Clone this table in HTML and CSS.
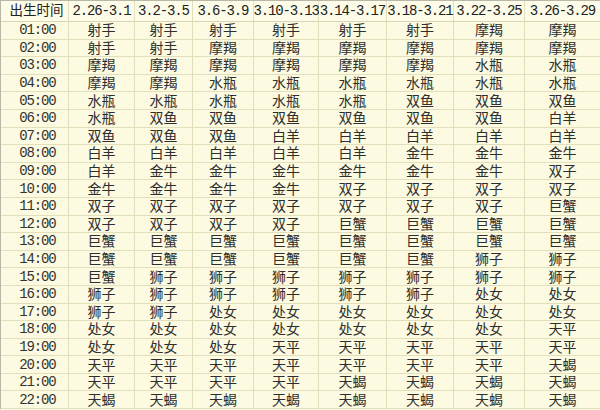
FILE: index.html
```html
<!DOCTYPE html>
<html lang="zh-CN">
<head>
<meta charset="utf-8">
<title>出生时间 星座表</title>
<link rel="stylesheet" href="styles.css">
</head>
<body>
<div class="sheet">
  <div class="c h first"><span>出生时间</span></div>
  <div class="c h num"><span>2.26-3.1</span></div>
  <div class="c h num"><span>3.2-3.5</span></div>
  <div class="c h num"><span>3.6-3.9</span></div>
  <div class="c h num"><span>3.10-3.13</span></div>
  <div class="c h num"><span>3.14-3.17</span></div>
  <div class="c h num"><span>3.18-3.21</span></div>
  <div class="c h num"><span>3.22-3.25</span></div>
  <div class="c h num"><span>3.26-3.29</span></div>

  <div class="c t">01:00</div><div class="c">射手</div><div class="c">射手</div><div class="c">射手</div><div class="c">射手</div><div class="c">射手</div><div class="c">射手</div><div class="c">摩羯</div><div class="c">摩羯</div>
  <div class="c t">02:00</div><div class="c">射手</div><div class="c">射手</div><div class="c">摩羯</div><div class="c">摩羯</div><div class="c">摩羯</div><div class="c">摩羯</div><div class="c">摩羯</div><div class="c">摩羯</div>
  <div class="c t">03:00</div><div class="c">摩羯</div><div class="c">摩羯</div><div class="c">摩羯</div><div class="c">摩羯</div><div class="c">摩羯</div><div class="c">摩羯</div><div class="c">水瓶</div><div class="c">水瓶</div>
  <div class="c t">04:00</div><div class="c">摩羯</div><div class="c">摩羯</div><div class="c">水瓶</div><div class="c">水瓶</div><div class="c">水瓶</div><div class="c">水瓶</div><div class="c">水瓶</div><div class="c">水瓶</div>
  <div class="c t">05:00</div><div class="c">水瓶</div><div class="c">水瓶</div><div class="c">水瓶</div><div class="c">水瓶</div><div class="c">水瓶</div><div class="c">双鱼</div><div class="c">双鱼</div><div class="c">双鱼</div>
  <div class="c t">06:00</div><div class="c">水瓶</div><div class="c">双鱼</div><div class="c">双鱼</div><div class="c">双鱼</div><div class="c">双鱼</div><div class="c">双鱼</div><div class="c">双鱼</div><div class="c">白羊</div>
  <div class="c t">07:00</div><div class="c">双鱼</div><div class="c">双鱼</div><div class="c">双鱼</div><div class="c">白羊</div><div class="c">白羊</div><div class="c">白羊</div><div class="c">白羊</div><div class="c">白羊</div>
  <div class="c t">08:00</div><div class="c">白羊</div><div class="c">白羊</div><div class="c">白羊</div><div class="c">白羊</div><div class="c">白羊</div><div class="c">金牛</div><div class="c">金牛</div><div class="c">金牛</div>
  <div class="c t">09:00</div><div class="c">白羊</div><div class="c">金牛</div><div class="c">金牛</div><div class="c">金牛</div><div class="c">金牛</div><div class="c">金牛</div><div class="c">金牛</div><div class="c">双子</div>
  <div class="c t">10:00</div><div class="c">金牛</div><div class="c">金牛</div><div class="c">金牛</div><div class="c">金牛</div><div class="c">双子</div><div class="c">双子</div><div class="c">双子</div><div class="c">双子</div>
  <div class="c t">11:00</div><div class="c">双子</div><div class="c">双子</div><div class="c">双子</div><div class="c">双子</div><div class="c">双子</div><div class="c">双子</div><div class="c">双子</div><div class="c">巨蟹</div>
  <div class="c t">12:00</div><div class="c">双子</div><div class="c">双子</div><div class="c">双子</div><div class="c">双子</div><div class="c">巨蟹</div><div class="c">巨蟹</div><div class="c">巨蟹</div><div class="c">巨蟹</div>
  <div class="c t">13:00</div><div class="c">巨蟹</div><div class="c">巨蟹</div><div class="c">巨蟹</div><div class="c">巨蟹</div><div class="c">巨蟹</div><div class="c">巨蟹</div><div class="c">巨蟹</div><div class="c">巨蟹</div>
  <div class="c t">14:00</div><div class="c">巨蟹</div><div class="c">巨蟹</div><div class="c">巨蟹</div><div class="c">巨蟹</div><div class="c">巨蟹</div><div class="c">巨蟹</div><div class="c">狮子</div><div class="c">狮子</div>
  <div class="c t">15:00</div><div class="c">巨蟹</div><div class="c">狮子</div><div class="c">狮子</div><div class="c">狮子</div><div class="c">狮子</div><div class="c">狮子</div><div class="c">狮子</div><div class="c">狮子</div>
  <div class="c t">16:00</div><div class="c">狮子</div><div class="c">狮子</div><div class="c">狮子</div><div class="c">狮子</div><div class="c">狮子</div><div class="c">狮子</div><div class="c">处女</div><div class="c">处女</div>
  <div class="c t">17:00</div><div class="c">狮子</div><div class="c">狮子</div><div class="c">处女</div><div class="c">处女</div><div class="c">处女</div><div class="c">处女</div><div class="c">处女</div><div class="c">处女</div>
  <div class="c t">18:00</div><div class="c">处女</div><div class="c">处女</div><div class="c">处女</div><div class="c">处女</div><div class="c">处女</div><div class="c">处女</div><div class="c">处女</div><div class="c">天平</div>
  <div class="c t">19:00</div><div class="c">处女</div><div class="c">处女</div><div class="c">处女</div><div class="c">天平</div><div class="c">天平</div><div class="c">天平</div><div class="c">天平</div><div class="c">天平</div>
  <div class="c t">20:00</div><div class="c">天平</div><div class="c">天平</div><div class="c">天平</div><div class="c">天平</div><div class="c">天平</div><div class="c">天平</div><div class="c">天平</div><div class="c">天蝎</div>
  <div class="c t">21:00</div><div class="c">天平</div><div class="c">天平</div><div class="c">天平</div><div class="c">天平</div><div class="c">天蝎</div><div class="c">天蝎</div><div class="c">天蝎</div><div class="c">天蝎</div>
  <div class="c t">22:00</div><div class="c">天蝎</div><div class="c">天蝎</div><div class="c">天蝎</div><div class="c">天蝎</div><div class="c">天蝎</div><div class="c">天蝎</div><div class="c">天蝎</div><div class="c">天蝎</div>
</div>
</body>
</html>
```
FILE: styles.css
```css
html, body {
  margin: 0;
  padding: 0;
  background: #fcfae0;
}
body {
  width: 600px;
  height: 410px;
  overflow: hidden;
}
.sheet {
  display: grid;
  grid-template-columns: 68px 66px 58px 61px 65px 68px 67px 71px 76px;
  grid-template-rows: 21px repeat(22, 17.6px);
  width: 600px;
  box-sizing: border-box;
  border-top: 1px solid #b9b8a6;
  border-left: 1px solid #b9b8a6;
  background: #fcfae0;
  font-family: "Liberation Sans", "Noto Sans CJK SC", sans-serif;
  font-size: 14px;
  color: #2e2e2e;
}
.c {
  display: flex;
  align-items: center;
  justify-content: center;
  white-space: nowrap;
  border-right: 1px solid #e2dfbd;
  border-bottom: 1px solid #e2dfbd;
  line-height: 1;
  min-width: 0;
}
.h {
  background: #fdfce8;
  color: #222;
  border-bottom-color: #d9d6b4;
}
.h span {
  flex: none;
}
.first {
  padding-left: 4px;
  font-size: 13.5px;
}
.num, .t {
  font-family: "Liberation Mono", "DejaVu Sans Mono", monospace;
  font-size: 14px;
  letter-spacing: -1.15px;
}
.t {
  padding-left: 6px;
  color: #333;
}
```
